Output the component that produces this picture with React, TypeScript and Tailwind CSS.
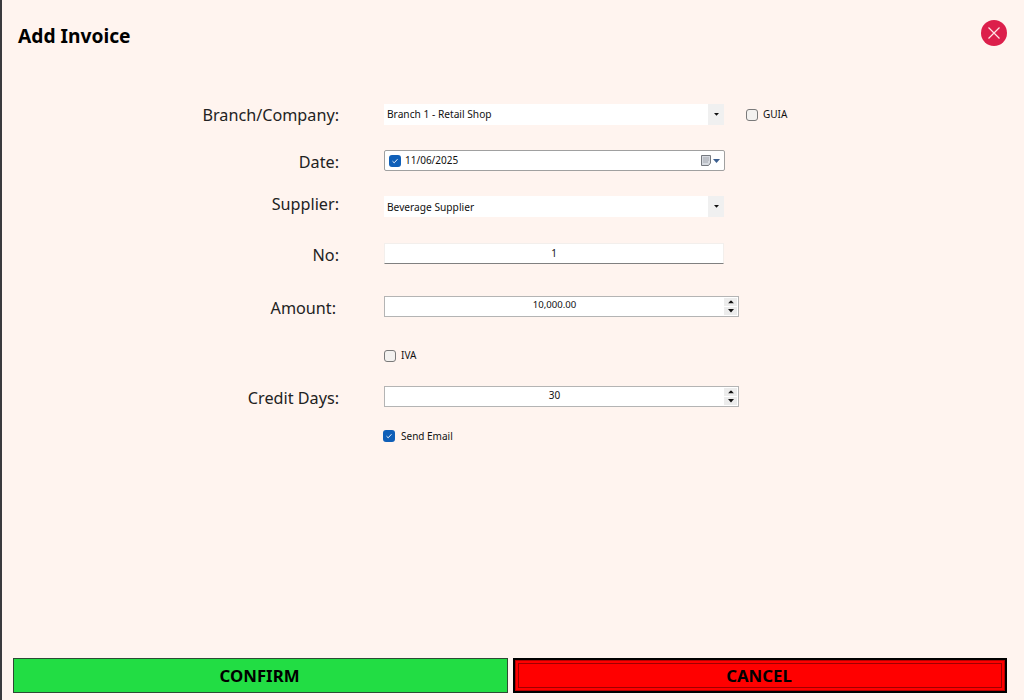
import React from "react";

function Arrow({ className = "", w = 7 }: { className?: string; w?: number }) {
  return (
    <svg width={w} height={(w * 4) / 7} viewBox="0 0 7 4" className={className}>
      <path d="M0 0H7L3.5 4Z" fill="currentColor" />
    </svg>
  );
}

function Label({ text, className = "" }: { text: string; className?: string }) {
  return (
    <div className="w-[337px] shrink-0 text-right text-[16.2px] leading-[21px] text-[#222]">
      <span className={`relative inline-block ${className}`}>{text}</span>
    </div>
  );
}

function Combo({ text, textClass = "" }: { text: string; textClass?: string }) {
  return (
    <div className="flex h-[21px] w-[340px] items-center bg-white">
      <span className={`relative flex-1 pl-[3px] text-[10.2px] text-[#111] ${textClass}`}>{text}</span>
      <span className="flex h-full w-[16px] items-center justify-center bg-[#f0f0f0] text-[#111]">
        <Arrow w={5} />
      </span>
    </div>
  );
}

function Spin({ value, textClass = "" }: { value: string; textClass?: string }) {
  return (
    <div className="flex h-[21px] w-[355px] items-center border border-[#b4b4b4] bg-white">
      <span className={`relative -top-[1px] flex-1 text-center text-[#111] ${textClass}`}>{value}</span>
      <span className="mr-[1px] flex h-full w-[13px] flex-col justify-center gap-[1px]">
        <span className="flex h-[8px] items-center justify-center bg-[#ececec] text-[#111]">
          <Arrow w={6} className="rotate-180" />
        </span>
        <span className="flex h-[8px] items-center justify-center bg-[#ececec] text-[#111]">
          <Arrow w={6} />
        </span>
      </span>
    </div>
  );
}

function Check({ checked }: { checked?: boolean }) {
  if (checked) {
    return (
      <span className="flex h-[12px] w-[12px] shrink-0 items-center justify-center rounded-[3px] bg-[#0f5fb8]">
        <svg width="8" height="8" viewBox="0 0 8 8" fill="none">
          <path d="M1.5 4.2L3.2 5.8L6.5 2.2" stroke="#e8f0fa" strokeWidth="1" />
        </svg>
      </span>
    );
  }
  return <span className="block h-[12px] w-[12px] shrink-0 rounded-[3px] border border-[#7a7a7a] bg-[#f3f1ef]" />;
}

export default function App() {
  return (
    <div className="flex h-[700px] w-[1024px] flex-col overflow-hidden border-l-2 border-[#3a3a3e] bg-[#fff4ef] font-['Noto_Sans',sans-serif]">
      <div className="flex h-[70px] items-center justify-between pl-[16px] pr-[17px]">
        <h1 className="relative top-[1px] text-[19.2px] font-bold leading-none text-black">Add Invoice</h1>
        <button className="relative -top-[2px] flex h-[26px] w-[26px] items-center justify-center rounded-full bg-[#dc1f4b]">
          <svg width="14" height="14" viewBox="0 0 14 14" fill="none">
            <path d="M1.5 1.5L12.5 12.5M12.5 1.5L1.5 12.5" stroke="#ffe4e6" strokeWidth="1.2" />
          </svg>
        </button>
      </div>

      <div className="flex flex-1 flex-col">
        <div className="mt-[34px] flex items-center">
          <Label text="Branch/Company:" className="top-[1px]" />
          <div className="ml-[45px]"><Combo text="Branch 1 - Retail Shop" /></div>
          <div className="ml-[22px] flex items-center gap-[5px]">
            <Check />
            <span className="text-[10px] text-[#111]">GUIA</span>
          </div>
        </div>

        <div className="mt-[25px] flex items-center">
          <Label text="Date:" className="top-[2px]" />
          <div className="ml-[45px] flex h-[21px] w-[341px] items-center rounded-[2px] border border-[#a0a0a0] bg-white px-[4px]">
            <Check checked />
            <span className="ml-[4px] flex-1 text-[10px] text-[#111]">11/06/2025</span>
            <svg width="11" height="11" viewBox="0 0 11 11">
              <path d="M0.5 0.5H9.5V8L7.5 10.5H0.5Z" fill="#d6dae0" stroke="#75797f" />
              <path d="M2 3H8M2 5H8M2 7H7" stroke="#a4a8b0" />
            </svg>
            <Arrow className="ml-[1px] text-[#3c5f8f]" />
          </div>
        </div>

        <div className="mt-[25px] flex items-center">
          <Label text="Supplier:" className="-top-[2px]" />
          <div className="ml-[45px]"><Combo text="Beverage Supplier" textClass="top-[1px]" /></div>
        </div>

        <div className="mt-[26px] flex items-center">
          <Label text="No:" className="top-[2px]" />
          <div className="ml-[45px] flex h-[21px] w-[340px] items-center justify-center border border-[#f3efec] border-b-[#808080] bg-white text-[10px] text-[#111]">
            1
          </div>
        </div>

        <div className="mt-[32px] flex items-center">
          <Label text="Amount:" className="top-[2px] -left-[3px]" />
          <div className="ml-[45px]"><Spin value="10,000.00" textClass="text-[9.6px]" /></div>
        </div>

        <div className="ml-[382px] mt-[33px] flex h-[12px] items-center gap-[5px]">
          <Check />
          <span className="relative -top-[1px] text-[10px] text-[#111]">IVA</span>
        </div>

        <div className="mt-[24px] flex items-center">
          <Label text="Credit Days:" className="top-[2px]" />
          <div className="ml-[45px]"><Spin value="30" textClass="text-[10px]" /></div>
        </div>

        <div className="ml-[381px] mt-[23px] flex h-[12px] items-center gap-[6px]">
          <Check checked />
          <span className="text-[10px] text-[#111]">Send Email</span>
        </div>
      </div>

      <div className="flex gap-[5px] pb-[7px] pl-[11px] pr-[17px]">
        <button className="h-[35px] w-[495px] border border-[#2d4a33] bg-[#22dd44] pr-[2px] text-[16.8px] font-bold text-black">
          CONFIRM
        </button>
        <button className="h-[35px] w-[494px] border-2 border-black bg-[#ff0000] text-[16.8px] font-bold text-black">
          <span className="block h-full border border-[#b80000] p-[2px]">
            <span className="flex h-full items-center justify-center border border-[#a00000] pr-[2px]">CANCEL</span>
          </span>
        </button>
      </div>
    </div>
  );
}
